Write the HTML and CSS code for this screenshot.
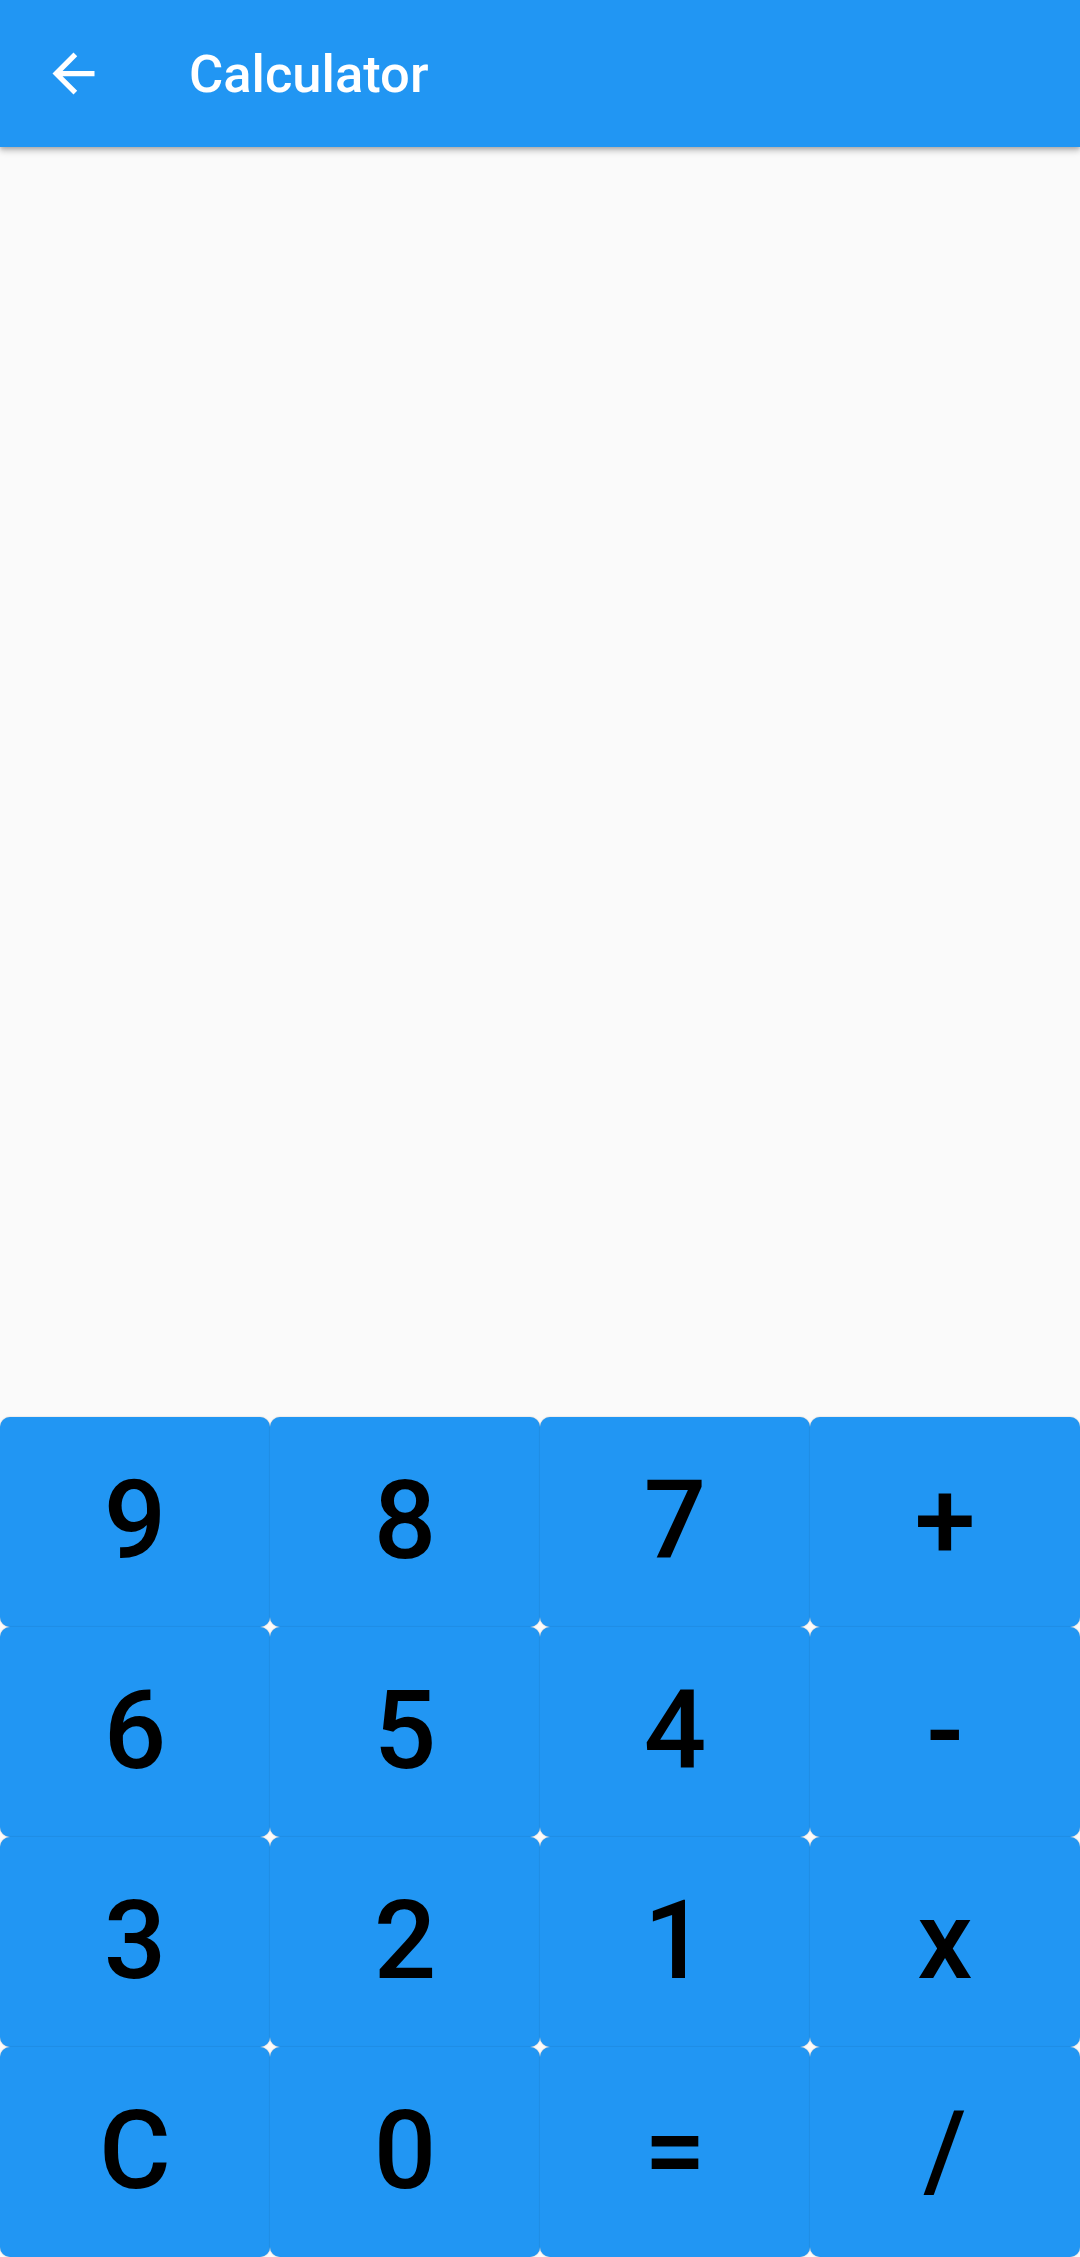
FILE: index.html
```html
<!DOCTYPE html>
<html>
<head>
<meta charset="utf-8">
<link rel="stylesheet" href="styles.css">
</head>
<body>
<div class="app">
  <header class="appbar">
    <svg class="back" viewBox="0 0 24 24" width="63" height="63"><path fill="#fff" d="M20 11H7.83l5.59-5.59L12 4l-8 8 8 8 1.41-1.41L7.83 13H20v-2z"/></svg>
    <div class="title">Calculator</div>
  </header>
  <main class="display"></main>
  <div class="keypad">
    <button class="key">9</button>
    <button class="key">8</button>
    <button class="key">7</button>
    <button class="key">+</button>
    <button class="key">6</button>
    <button class="key">5</button>
    <button class="key">4</button>
    <button class="key">-</button>
    <button class="key">3</button>
    <button class="key">2</button>
    <button class="key">1</button>
    <button class="key">x</button>
    <button class="key">C</button>
    <button class="key">0</button>
    <button class="key">=</button>
    <button class="key">/</button>
  </div>
</div>
</body>
</html>
```
FILE: styles.css
```css
html, body {
  margin: 0;
  padding: 0;
  background: #fafafa;
}
.app {
  width: 1080px;
  height: 2257px;
  display: flex;
  flex-direction: column;
  overflow: hidden;
  font-family: Roboto, "Noto Sans", sans-serif;
}
.appbar {
  height: 147px;
  flex: none;
  background: #2196f3;
  display: flex;
  align-items: center;
  box-shadow: 0 4px 6px rgba(0,0,0,0.22), 0 2px 3px rgba(0,0,0,0.12);
  position: relative;
  z-index: 2;
}
.back {
  margin-left: 42px;
  display: block;
}
.title {
  margin-left: 84px;
  color: #fff;
  font-size: 52.5px;
  font-weight: 500;
}
.display {
  flex: 1;
}
.keypad {
  flex: none;
  display: grid;
  grid-template-columns: repeat(4, 270px);
  grid-auto-rows: 210px;
}
.key {
  margin: 0;
  padding: 0;
  border: none;
  background: #2196f3;
  border-radius: 10px;
  box-shadow: 0 0 1.5px rgba(0,0,0,0.28);
  font-family: Roboto, "Noto Sans", sans-serif;
  font-size: 110px;
  font-weight: 500;
  color: #000;
  display: flex;
  align-items: center;
  justify-content: center;
  line-height: 1;
  padding-bottom: 3px;
}
```
